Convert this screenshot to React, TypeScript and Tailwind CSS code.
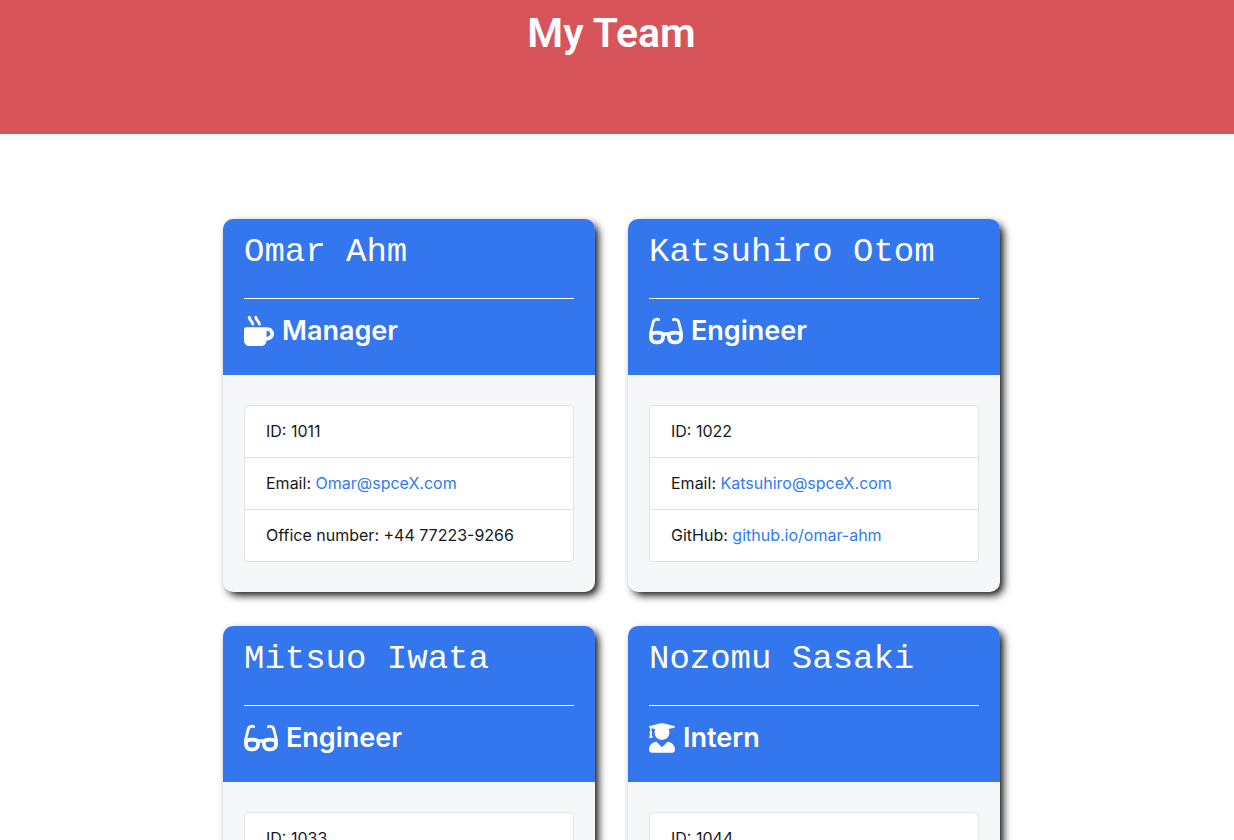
import type { ReactNode } from "react";
import type { IconType } from "react-icons";
import { FaGlasses, FaMugHot, FaUserGraduate } from "react-icons/fa";

type Role = "Manager" | "Engineer" | "Intern";

type Detail = { label: string; value: string; href?: string };

type Member = {
  name: string;
  role: Role;
  details: Detail[];
};

const roleIcons: Record<Role, { icon: IconType; width: string }> = {
  Manager: { icon: FaMugHot, width: "w-[30px]" },
  Engineer: { icon: FaGlasses, width: "w-[34px]" },
  Intern: { icon: FaUserGraduate, width: "w-[26px]" },
};

const team: Member[] = [
  {
    name: "Omar Ahm",
    role: "Manager",
    details: [
      { label: "ID", value: "1011" },
      { label: "Email", value: "Omar@spceX.com", href: "mailto:Omar@spceX.com" },
      { label: "Office number", value: "+44 77223-9266" },
    ],
  },
  {
    name: "Katsuhiro Otom",
    role: "Engineer",
    details: [
      { label: "ID", value: "1022" },
      { label: "Email", value: "Katsuhiro@spceX.com", href: "mailto:Katsuhiro@spceX.com" },
      { label: "GitHub", value: "github.io/omar-ahm", href: "https://github.io/omar-ahm" },
    ],
  },
  {
    name: "Mitsuo Iwata",
    role: "Engineer",
    details: [{ label: "ID", value: "1033" }],
  },
  {
    name: "Nozomu Sasaki",
    role: "Intern",
    details: [{ label: "ID", value: "1044" }],
  },
];

function DetailRow({ label, children }: { label: string; children: ReactNode }) {
  return (
    <li className="border-b border-[#e1e3e5] px-[21px] py-[13px] last:border-b-0">
      {label}: {children}
    </li>
  );
}

function MemberCard({ name, role, details }: Member) {
  const { icon: Icon, width } = roleIcons[role];
  return (
    <article className="overflow-hidden rounded-[10px] bg-[#f5f7f9] shadow-[4px_4px_8px_-1px_#000000]">
      <header className="bg-[#3376ee] px-[21px] pt-[13px] pb-6 text-white">
        <h2 className="font-['Liberation_Mono',monospace] text-[34px] leading-10">{name}</h2>
        <hr className="mt-[26px] border-t border-white" />
        <h3 className="mt-3 flex items-center gap-2 text-[27px] leading-10 font-semibold">
          <Icon className={`h-[30px] ${width}`} aria-hidden="true" />
          {role}
        </h3>
      </header>
      <div className="px-[21px] py-[30px]">
        <ul className="rounded-[4px] border border-[#e1e3e5] bg-white text-[16px] leading-[25px] text-[#16181b]">
          {details.map(({ label, value, href }) => (
            <DetailRow key={label} label={label}>
              {href ? (
                <a href={href} className="text-[#2f7bf6]">
                  {value}
                </a>
              ) : (
                value
              )}
            </DetailRow>
          ))}
        </ul>
      </div>
    </article>
  );
}

export default function App() {
  return (
    <div className="min-h-screen bg-white font-['Inter',sans-serif]">
      <header className="bg-[#d7545a] pt-2 pr-[11px] pb-[75px] text-center text-white">
        <h1 className="font-['Roboto',sans-serif] text-[41px] leading-[51px] font-semibold">My Team</h1>
      </header>
      <main className="flex justify-center pt-[85px] pr-[11px] pb-[34px]">
        <div className="grid w-full max-w-[777px] grid-cols-1 gap-x-[33px] gap-y-[34px] sm:grid-cols-2">
          {team.map((member) => (
            <MemberCard key={member.name} {...member} />
          ))}
        </div>
      </main>
    </div>
  );
}
